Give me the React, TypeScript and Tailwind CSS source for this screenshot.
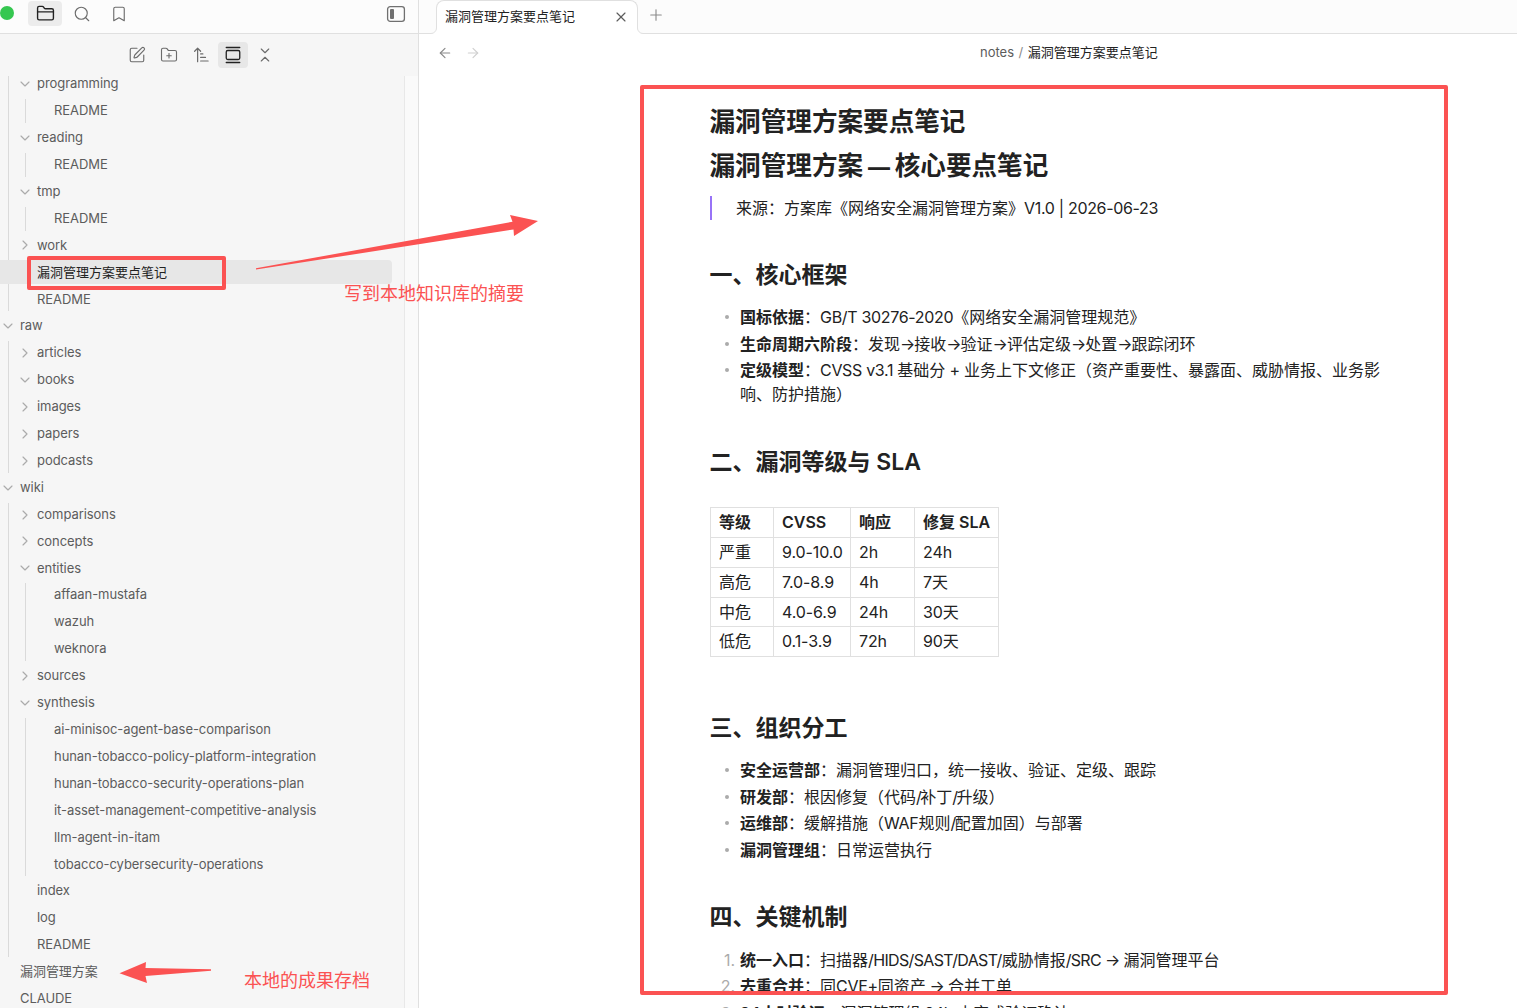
import type { ReactNode } from "react";
import {
  ArrowLeft,
  ArrowRight,
  Bookmark,
  ChevronDown,
  ChevronRight,
  ChevronsDownUp,
  FolderPlus,
  GalleryVertical,
  Plus,
  Search,
  SquarePen,
  X,
} from "lucide-react";
import clsx from "clsx";

interface TreeNode {
  name: string;
  open?: boolean;
  folder?: boolean;
  active?: boolean;
  children?: TreeNode[];
}

const file = (name: string): TreeNode => ({ name });
const closed = (name: string): TreeNode => ({ name, folder: true });
const opened = (name: string, children: TreeNode[] = []): TreeNode => ({
  name,
  folder: true,
  open: true,
  children,
});

const notes: TreeNode[] = [
  opened("programming", [file("README")]),
  opened("reading", [file("README")]),
  opened("tmp", [file("README")]),
  closed("work"),
  { name: "漏洞管理方案要点笔记", active: true },
  file("README"),
];

const vault: TreeNode[] = [
  opened("raw", [
    closed("articles"),
    opened("books"),
    closed("images"),
    closed("papers"),
    closed("podcasts"),
  ]),
  opened("wiki", [
    closed("comparisons"),
    closed("concepts"),
    opened("entities", [file("affaan-mustafa"), file("wazuh"), file("weknora")]),
    closed("sources"),
    opened("synthesis", [
      file("ai-minisoc-agent-base-comparison"),
      file("hunan-tobacco-policy-platform-integration"),
      file("hunan-tobacco-security-operations-plan"),
      file("it-asset-management-competitive-analysis"),
      file("llm-agent-in-itam"),
      file("tobacco-cybersecurity-operations"),
    ]),
    file("index"),
    file("log"),
    file("README"),
  ]),
  file("漏洞管理方案"),
  file("CLAUDE"),
];

const slaRows = [
  ["严重", "9.0-10.0", "2h", "24h"],
  ["高危", "7.0-8.9", "4h", "7天"],
  ["中危", "4.0-6.9", "24h", "30天"],
  ["低危", "0.1-3.9", "72h", "90天"],
];

function TreeGroup({ nodes }: { nodes: TreeNode[] }) {
  return (
    <div className="ml-2 flex flex-col gap-[2.91px] border-l border-[#dadada] pl-2">
      {nodes.map((node, i) => (
        <TreeItem key={i} node={node} />
      ))}
    </div>
  );
}

function TreeItem({ node }: { node: TreeNode }) {
  const Chevron = node.open ? ChevronDown : ChevronRight;
  return (
    <>
      <div
        className={clsx(
          "flex h-6 shrink-0 items-center whitespace-nowrap",
          node.active ? "-ml-[17px] rounded-r bg-[#e7e7e7] pl-[17px] text-[#222222]" : "tracking-[-0.06px]",
        )}
      >
        <span className="mr-1 flex w-4 shrink-0 justify-center">
          {node.folder && <Chevron size={16} strokeWidth={1.75} className="text-[#ababab]" />}
        </span>
        {node.name}
      </div>
      {node.children && node.children.length > 0 && <TreeGroup nodes={node.children} />}
    </>
  );
}

function FolderIcon() {
  return (
    <svg width="19" height="19" viewBox="0 0 24 24" fill="none" stroke="currentColor" strokeWidth="1.75" strokeLinecap="round" strokeLinejoin="round" aria-hidden="true">
      <path d="M20 20a2 2 0 0 0 2-2V8a2 2 0 0 0-2-2h-7.9a2 2 0 0 1-1.69-.9L9.6 3.9A2 2 0 0 0 7.93 3H4a2 2 0 0 0-2 2v13a2 2 0 0 0 2 2Z" />
      <path d="M2 10h20" />
    </svg>
  );
}

function SidebarToggleIcon() {
  return (
    <svg width="20" height="18" viewBox="0 0 20 18" fill="none" aria-hidden="true">
      <rect x="1.6" y="1.6" width="16.8" height="14.8" rx="2.6" stroke="#707070" strokeWidth="1.3" />
      <rect x="4" y="4" width="4" height="10" rx="1" fill="#707070" />
    </svg>
  );
}

function SortIcon() {
  return (
    <svg width="18" height="18" viewBox="0 0 24 24" fill="none" stroke="currentColor" strokeWidth="1.6" strokeLinecap="round" strokeLinejoin="round" aria-hidden="true">
      <path d="M3.5 7l4-4 4 4M7.5 3v18M11.5 10.5h3M11.5 15.2h6.5M11.5 20h10" />
    </svg>
  );
}

function Sidebar() {
  return (
    <aside className="flex w-[419px] shrink-0 flex-col border-r border-[#e0e0e0] bg-[#f6f6f6]">
      <div className="flex h-[34px] shrink-0 items-center border-b border-[#e0e0e0] bg-[#fcfcfc] pb-1 pr-3 text-[#6b6b6b]">
        <span className="-mt-1 h-[14px] w-[14px] rounded-full bg-[#35c750]" />
        <span className="ml-[14px] mt-[-3px] flex h-[25px] w-[34px] items-center justify-center rounded bg-[#ececec] pt-px text-[#222222]">
          <FolderIcon />
        </span>
        <Search size={18} strokeWidth={1.5} className="ml-[11px] -mt-0.5" />
        <Bookmark size={18} strokeWidth={1.5} className="ml-[19px] -mt-0.5" />
        <span className="-mt-0.5 ml-auto">
          <SidebarToggleIcon />
        </span>
      </div>

      <div className="flex h-[42px] shrink-0 items-center pl-32 text-[#6b6b6b]">
        <SquarePen size={18} strokeWidth={1.5} />
        <FolderPlus size={18} strokeWidth={1.5} className="ml-[14px]" />
        <span className="ml-[14px]">
          <SortIcon />
        </span>
        <span className="ml-2 flex h-[26px] w-[30px] items-center justify-center rounded bg-[#e7e7e7] text-[#222222]">
          <GalleryVertical size={18} strokeWidth={1.75} />
        </span>
        <ChevronsDownUp size={18} strokeWidth={1.5} className="ml-2" />
      </div>

      <div className="flex min-h-0 flex-1">
        <div className="flex min-w-0 flex-1 flex-col overflow-hidden pr-3 text-[13px] text-[#5c5c5c]">
          <div className="-mt-1 flex flex-col gap-[2.91px]">
            <TreeGroup nodes={notes} />
            {vault.map((node) => (
              <TreeItem key={node.name} node={node} />
            ))}
          </div>
        </div>
        <div className="w-[14px] shrink-0 border-l border-[#e8e8e8] bg-[#fafafa]" />
      </div>
    </aside>
  );
}

function TabBar() {
  return (
    <div className="flex h-[34px] shrink-0 bg-[#fcfcfc]">
      <div className="w-[17px] border-b border-[#e0e0e0]" />
      <div className="relative flex w-[202px] items-center rounded-t-[8px] border border-b-0 border-[#e0e0e0] bg-white pb-[2px] pl-2 pr-[8px] text-[13px] text-[#222222]">
        <span>漏洞管理方案要点笔记</span>
        <X size={16} strokeWidth={1.75} className="ml-auto text-[#5c5c5c]" />
        <svg className="absolute -left-[6px] bottom-0" width="6" height="6" viewBox="0 0 6 6" aria-hidden="true">
          <path d="M0 6V5.5A5.5 5.5 0 0 0 5.5 0H6V6Z" fill="#fff" />
          <path d="M0 5.5A5.5 5.5 0 0 0 5.5 0" fill="none" stroke="#e0e0e0" />
        </svg>
        <svg className="absolute -right-[6px] bottom-0" width="6" height="6" viewBox="0 0 6 6" aria-hidden="true">
          <path d="M6 6V5.5A5.5 5.5 0 0 1 .5 0H0V6Z" fill="#fff" />
          <path d="M6 5.5A5.5 5.5 0 0 1 .5 0" fill="none" stroke="#e0e0e0" />
        </svg>
      </div>
      <div className="flex flex-1 items-center border-b border-[#e0e0e0] pb-[3px] pl-[9px] text-[#8a8a8a]">
        <Plus size={18} strokeWidth={1.5} />
      </div>
    </div>
  );
}

function Heading({ children, className }: { children: ReactNode; className?: string }) {
  return (
    <h2 className={clsx("ml-[-0.5px] h-7 text-[23px] leading-7 font-semibold whitespace-nowrap", className)}>
      {children}
    </h2>
  );
}

function Tight({ children }: { children: ReactNode }) {
  return <span className="tracking-[-0.32px]">{children}</span>;
}

function Item({ marker, label, children }: { marker?: string; label: string; children: ReactNode }) {
  return (
    <li className="flex py-[1.3px]">
      <span className="flex h-6 w-[30px] shrink-0 items-center text-[#ababab]">
        {marker ? (
          <span className="w-[25px] text-right">{marker}</span>
        ) : (
          <span className="ml-[15px] h-1 w-1 rounded-full bg-[#ababab]" />
        )}
      </span>
      <p>
        <strong className="font-semibold">{label}</strong>：{children}
      </p>
    </li>
  );
}

function Note() {
  return (
    <article className="ml-[291px] mt-[35px] w-[675px] text-base leading-6 text-[#222222]">
      <h1 className="ml-[-0.5px] h-8 text-[25.6px] leading-8 font-bold">漏洞管理方案要点笔记</h1>
      <h1 className="ml-[-0.5px] mt-3 h-8 text-[25.6px] leading-8 font-bold">
        漏洞管理方案<span className="text-[22px] font-extrabold"> — </span>核心要点笔记
      </h1>
      <blockquote className="mt-[14px] -ml-px border-l-2 border-[#9873f7] pl-6 translate-x-px">
        来源：方案库《网络安全漏洞管理方案》<Tight>V1.0 | 2026-06-23</Tight>
      </blockquote>

      <Heading className="mt-[41px]">一、核心框架</Heading>
      <ul className="mt-[15px]">
        <Item label="国标依据">
          <Tight>GB/T 30276-2020</Tight>《网络安全漏洞管理规范》
        </Item>
        <Item label="生命周期六阶段">
          发现<span className="tracking-[-1px]">→</span>接收<span className="tracking-[-1px]">→</span>验证
          <span className="tracking-[-1px]">→</span>评估定级<span className="tracking-[-1px]">→</span>处置
          <span className="tracking-[-1px]">→</span>跟踪闭环
        </Item>
        <Item label="定级模型">
          <Tight>CVSS v3.1 </Tight>基础分<Tight> + </Tight>业务上下文修正（资产重要性、暴露面、威胁情报、业务影响、防护措施）
        </Item>
      </ul>

      <Heading className="mt-[40.2px]">二、漏洞等级与 SLA</Heading>
      <table className="mt-[31px] w-[289px] table-fixed border-collapse">
        <colgroup>
          <col className="w-[63px]" />
          <col className="w-[77px]" />
          <col className="w-16" />
          <col className="w-[84px]" />
        </colgroup>
        <thead>
          <tr>
            {["等级", "CVSS", "响应", "修复 SLA"].map((h) => (
              <th key={h} className="h-[30px] border border-[#e0e0e0] px-2 text-left font-semibold whitespace-nowrap">
                {h}
              </th>
            ))}
          </tr>
        </thead>
        <tbody>
          {slaRows.map((row) => (
            <tr key={row[0]} className="h-[30px] nth-3:h-[29px]">
              {row.map((cell) => (
                <td key={cell} className="border border-[#e0e0e0] px-2 tracking-[-0.1px] whitespace-nowrap">
                  {cell}
                </td>
              ))}
            </tr>
          ))}
        </tbody>
      </table>

      <Heading className="mt-[57px]">三、组织分工</Heading>
      <ul className="mt-[15px]">
        <Item label="安全运营部">漏洞管理归口，统一接收、验证、定级、跟踪</Item>
        <Item label="研发部">
          根因修复（代码<span className="tracking-[-1.5px]">/</span>补丁<span className="tracking-[-1.5px]">/</span>升级）
        </Item>
        <Item label="运维部">
          缓解措施（<Tight>WAF</Tight>规则<span className="tracking-[-1.5px]">/</span>配置加固）与部署
        </Item>
        <Item label="漏洞管理组">日常运营执行</Item>
      </ul>

      <Heading className="mt-10">四、关键机制</Heading>
      <ol className="mt-[15px]">
        <Item marker="1." label="统一入口">
          扫描器<span className="tracking-[-0.65px]">/HIDS/SAST/DAST/</span>威胁情报
          <span className="tracking-[-0.65px]">/SRC → </span>漏洞管理平台
        </Item>
        <Item marker="2." label="去重合并">
          同<Tight>CVE+</Tight>同资产<span className="tracking-[-0.7px]"> → </span>合并工单
        </Item>
        <Item marker="3." label="24小时验证">
          漏洞管理组<Tight> 24h </Tight>内完成验证确认
        </Item>
      </ol>
    </article>
  );
}

// Red frames, arrows and captions laid over the window
function Annotations() {
  return (
    <div className="pointer-events-none absolute inset-0 text-[#fb5252]">
      <div className="absolute left-[27px] top-[256px] h-[34px] w-[199px] rounded-[2px] border-4 border-[#fb5252]" />
      <div className="absolute left-[640px] top-[85px] h-[910px] w-[808px] rounded-[2px] border-4 border-[#fb5252]" />
      <svg className="absolute left-0 top-0" width="560" height="1008" viewBox="0 0 560 1008" fill="currentColor" aria-hidden="true">
        <path d="M256 268.3L512.5 221.8L510 215L538 221L514 236L513.5 229.5L256 269.6Z" />
        <path d="M119.5 973.3L146 962L145.5 968L211 969.2V970.8L145.5 976L147 983Z" />
      </svg>
      <span className="absolute left-[344px] top-[282px] text-[18px] leading-6 whitespace-nowrap">写到本地知识库的摘要</span>
      <span className="absolute left-[244px] top-[969px] text-[18px] leading-6 whitespace-nowrap">本地的成果存档</span>
    </div>
  );
}

export default function App() {
  return (
    <div className="relative flex h-[1008px] w-[1517px] overflow-hidden bg-white font-['Inter','Noto_Sans_CJK_SC',sans-serif]">
      <Sidebar />
      <main className="flex min-w-0 flex-1 flex-col overflow-hidden">
        <TabBar />
        <div className="flex h-[37px] shrink-0 items-center text-[13px]">
          <ArrowLeft size={16} strokeWidth={1.75} className="ml-[18px] text-[#8a8a8a]" />
          <ArrowRight size={16} strokeWidth={1.75} className="ml-3 text-[#d0d0d0]" />
          <div className="ml-[499px] flex whitespace-nowrap text-[#5c5c5c]">
            notes<span className="mx-[4.5px] text-[#8a8a8a]">/</span>
            <span className="text-[#222222]">漏洞管理方案要点笔记</span>
          </div>
        </div>
        <Note />
      </main>
      <Annotations />
    </div>
  );
}
